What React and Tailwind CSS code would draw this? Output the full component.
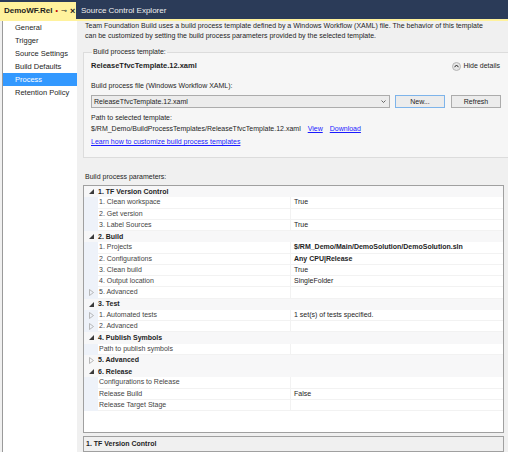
import React from "react";

const navItems = [
  "General",
  "Trigger",
  "Source Settings",
  "Build Defaults",
  "Process",
  "Retention Policy",
];

// kind: cat = category row, item = property row
const rows = [
  { kind: "cat", name: "1. TF Version Control", open: true },
  { kind: "item", name: "1. Clean workspace", value: "True" },
  { kind: "item", name: "2. Get version" },
  { kind: "item", name: "3. Label Sources", value: "True" },
  { kind: "cat", name: "2. Build", open: true },
  { kind: "item", name: "1. Projects", value: "$/RM_Demo/Main/DemoSolution/DemoSolution.sln", bold: true },
  { kind: "item", name: "2. Configurations", value: "Any CPU|Release", bold: true },
  { kind: "item", name: "3. Clean build", value: "True" },
  { kind: "item", name: "4. Output location", value: "SingleFolder" },
  { kind: "item", name: "5. Advanced", expand: true },
  { kind: "cat", name: "3. Test", open: true },
  { kind: "item", name: "1. Automated tests", value: "1 set(s) of tests specified.", expand: true },
  { kind: "item", name: "2. Advanced", expand: true },
  { kind: "cat", name: "4. Publish Symbols", open: true },
  { kind: "item", name: "Path to publish symbols" },
  { kind: "cat", name: "5. Advanced", open: false },
  { kind: "cat", name: "6. Release", open: true },
  { kind: "item", name: "Configurations to Release" },
  { kind: "item", name: "Release Build", value: "False" },
  { kind: "item", name: "Release Target Stage" },
];

const OpenArrow = () => (
  <svg width="5" height="5" viewBox="0 0 5 5">
    <path d="M5 0 L5 5 L0 5 Z" fill="#3a3a3a" />
  </svg>
);

const ClosedArrow = () => (
  <svg width="5" height="7" viewBox="0 0 5 7">
    <path d="M0.5 0.5 L4.5 3.5 L0.5 6.5 Z" fill="none" stroke="#a8a8a8" strokeWidth="0.8" />
  </svg>
);

const ParamRow = ({ row }) => {
  if (row.kind === "cat") {
    return (
      <div className="flex h-[11.25px] items-center bg-[#f7f7f8]">
        <div className="flex w-[14px] shrink-0 justify-center">
          {row.open ? <OpenArrow /> : <ClosedArrow />}
        </div>
        <span className="font-bold text-[#1e1e1e]">{row.name}</span>
      </div>
    );
  }
  return (
    <div className="flex h-[11.25px] items-center">
      <div className="flex h-full w-[14px] shrink-0 items-center justify-center bg-[#eef2f9]">
        {row.expand && <ClosedArrow />}
      </div>
      <div className="flex h-full w-[193px] shrink-0 items-center border-r border-b border-[#f2f2f2] pl-[1px] text-[#444]">
        {row.name}
      </div>
      <div className={`flex h-full flex-1 items-center border-b border-[#f2f2f2] pl-[3px] text-[#1e1e1e] ${row.bold ? "font-bold" : ""}`}>
        {row.value}
      </div>
    </div>
  );
};

export default function App() {
  return (
    <div
      className="h-[452px] w-[508px] overflow-hidden bg-[#f0f0f0] text-[7px] leading-[10px] text-[#1e1e1e]"
      style={{ fontFamily: '"Liberation Sans", Arial, sans-serif' }}
    >
      {/* document tab strip */}
      <div className="flex h-[19px] items-end bg-[#2b3b58]">
        <div className="flex h-[17px] w-[76px] items-center gap-[3px] bg-[#fff29d] pl-[4px] font-bold text-[#1e1e1e]">
          <span className="text-[8px]">DemoWF.Rel</span>
          <span className="text-[#c00000]">•</span>
          <span className="text-[7px] font-normal">⊸</span>
          <span className="text-[9px]">×</span>
        </div>
        <div className="flex h-[17px] items-center pl-[5px] text-[8px] text-[#f0f0f0]">
          Source Control Explorer
        </div>
      </div>
      <div className="h-[2px] bg-[#fff29d]" />

      <div className="flex h-[431px]">
        {/* left navigation */}
        <div className="ml-[2px] w-[75px] shrink-0 border-l border-[#9a9a9a] bg-white text-[7.5px]">
          {navItems.map((item) => (
            <div
              key={item}
              className={`flex h-[13px] items-center pl-[12px] ${
                item === "Process" ? "bg-[#3399ff] text-white" : "text-[#1e1e1e]"
              }`}
            >
              {item}
            </div>
          ))}
        </div>

        {/* main area */}
        <div className="ml-[6px] flex w-[421px] flex-col">
          <p className="pl-[2px] leading-[9.5px]">
            Team Foundation Build uses a build process template defined by a Windows Workflow (XAML) file. The behavior of this template
            <br />
            can be customized by setting the build process parameters provided by the selected template.
          </p>

          <fieldset className="mt-[7px] h-[111px] border border-[#dcdcdc] bg-[#f6f6f6] px-[7px]">
            <legend className="ml-[1px] px-[1px]">Build process template:</legend>
            <div className="mt-[3px] flex h-[12px] items-center justify-between">
              <span className="text-[7.5px] font-bold">ReleaseTfvcTemplate.12.xaml</span>
              <span className="flex items-center gap-[2px] pr-[1px]">
                <span className="flex h-[9px] w-[9px] items-center justify-center rounded-full border border-[#b5b5b5] bg-[#e6e6e6]">
                  <svg width="5" height="4" viewBox="0 0 5 4">
                    <path d="M0.5 3.2 L2.5 1 L4.5 3.2" fill="none" stroke="#222" strokeWidth="1" />
                  </svg>
                </span>
                Hide details
              </span>
            </div>
            <div className="mt-[9px]">Build process file (Windows Workflow XAML):</div>
            <div className="mt-[4px] flex h-[13px] items-stretch">
              <div className="flex w-[299px] items-center justify-between border border-[#acacac] bg-[#ececec] pl-[2px] pr-[3px]">
                <span>ReleaseTfvcTemplate.12.xaml</span>
                <svg width="5" height="3" viewBox="0 0 5 3">
                  <path d="M0.5 0.5 L2.5 2.5 L4.5 0.5" fill="none" stroke="#444" strokeWidth="0.8" />
                </svg>
              </div>
              <div className="ml-[5px] flex w-[50px] items-center justify-center border border-[#7eb4ea] bg-[#ececec]">
                New...
              </div>
              <div className="ml-[6px] flex w-[50px] items-center justify-center border border-[#acacac] bg-[#ececec]">
                Refresh
              </div>
            </div>
            <div className="mt-[5px]">Path to selected template:</div>
            <div className="mt-[1px] flex">
              <span>$/RM_Demo/BuildProcessTemplates/ReleaseTfvcTemplate.12.xaml</span>
              <span className="ml-[7px] text-[#1a1aff] underline">View</span>
              <span className="ml-[7px] text-[#1a1aff] underline">Download</span>
            </div>
            <div className="mt-[3px] text-[#1a1aff] underline">Learn how to customize build process templates</div>
          </fieldset>

          <div className="mt-[14px] pl-[2px]">Build process parameters:</div>

          <div className="mt-[3px] h-[248px] border border-[#a0a0a0] bg-white">
            {rows.map((row, i) => (
              <ParamRow key={i} row={row} />
            ))}
          </div>

          <div className="mt-[3px] flex-1 border border-[#a0a0a0] bg-[#f0f0f0] pl-[2px] pt-[2px] font-bold">
            1. TF Version Control
          </div>
        </div>
      </div>
    </div>
  );
}
